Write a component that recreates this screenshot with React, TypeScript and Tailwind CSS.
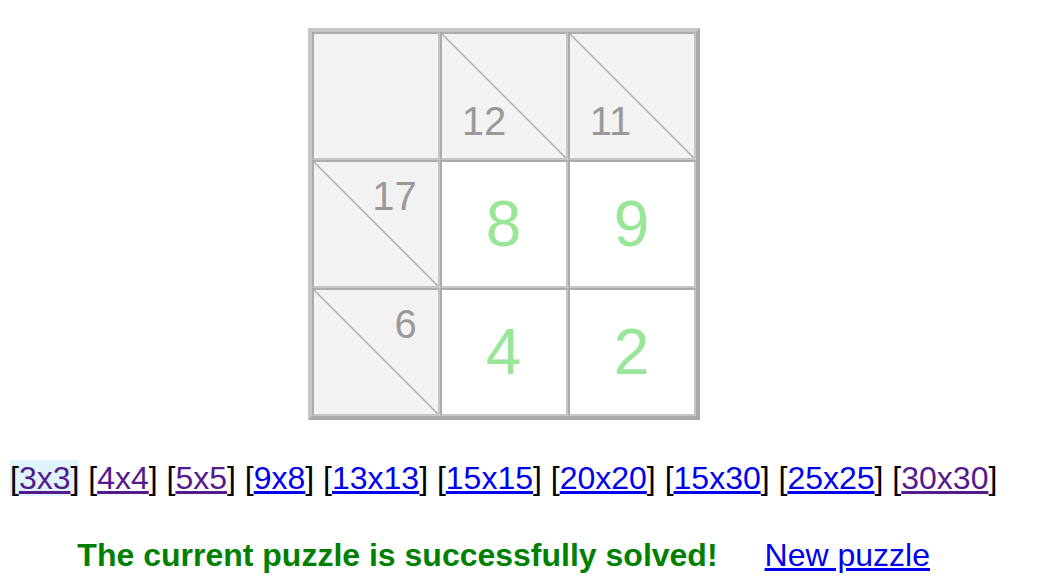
import React from 'react';

type Cell =
    | { kind: 'blank' }
    | { kind: 'down'; sum: number }
    | { kind: 'across'; sum: number }
    | { kind: 'value'; n: number };

const grid: Cell[][] = [
    [{ kind: 'blank' }, { kind: 'down', sum: 12 }, { kind: 'down', sum: 11 }],
    [{ kind: 'across', sum: 17 }, { kind: 'value', n: 8 }, { kind: 'value', n: 9 }],
    [{ kind: 'across', sum: 6 }, { kind: 'value', n: 4 }, { kind: 'value', n: 2 }],
];

const sizes = [
    { label: '3x3', visited: true, current: true },
    { label: '4x4', visited: true },
    { label: '5x5', visited: true },
    { label: '9x8' },
    { label: '13x13' },
    { label: '15x15' },
    { label: '20x20' },
    { label: '15x30' },
    { label: '25x25' },
    { label: '30x30', visited: true },
];

function Diagonal() {
    return (
        <svg className="absolute inset-0 w-full h-full" viewBox="0 0 100 100" preserveAspectRatio="none">
            <line x1="0" y1="0" x2="100" y2="100" stroke="#b0b0b0" strokeWidth="1.5" vectorEffect="non-scaling-stroke" />
        </svg>
    );
}

function GridCell({ cell }: { cell: Cell }) {
    const base = 'relative w-[128px] h-[128px] border-2 border-t-[#aaaaaa] border-l-[#aaaaaa] border-b-[#c6c6c6] border-r-[#c6c6c6]';

    if (cell.kind === 'value') {
        return (
            <div className={`${base} bg-white flex items-center justify-center`}>
                <span className="text-[64px] leading-none text-[#99e699]">{cell.n}</span>
            </div>
        );
    }

    if (cell.kind === 'down') {
        return (
            <div className={`${base} bg-[#f2f2f2] flex items-end justify-start pl-[20px] pb-[17px]`}>
                <Diagonal />
                <span className="relative text-[40px] leading-[40px] text-[#999999]">{cell.sum}</span>
            </div>
        );
    }

    if (cell.kind === 'across') {
        return (
            <div className={`${base} bg-[#f2f2f2] flex items-start justify-end pr-[21px] pt-[14px]`}>
                <Diagonal />
                <span className="relative text-[40px] leading-[40px] text-[#999999]">{cell.sum}</span>
            </div>
        );
    }

    return <div className={`${base} bg-[#f2f2f2]`} />;
}

export default function App() {
    return (
        <div className="min-h-screen bg-white">
            <div className="w-fit ml-[10px] pt-[28px] text-center font-['Liberation_Sans',Arial,sans-serif] text-black">
                {/* Board */}
                <div className="w-fit mx-auto border-4 border-t-[#c6c6c6] border-l-[#c6c6c6] border-b-[#aaaaaa] border-r-[#aaaaaa]">
                    {grid.map((row, r) => (
                        <div key={r} className="flex">
                            {row.map((cell, c) => (
                                <GridCell key={c} cell={cell} />
                            ))}
                        </div>
                    ))}
                </div>

                {/* Sizes */}
                <div className="mt-[40px] text-[32px] leading-[normal] whitespace-nowrap">
                    {sizes.map((s, i) => (
                        <React.Fragment key={s.label}>
                            {i > 0 && ' '}
                            <span className={s.current ? 'bg-[#dff4fc]' : ''}>
                                [<a href="#" className={`underline ${s.visited ? 'text-[#551a8b]' : 'text-[#0000ee]'}`}>{s.label}</a>]
                            </span>
                        </React.Fragment>
                    ))}
                </div>

                {/* Status */}
                <div className="mt-[40px] text-[32px] leading-[normal] whitespace-nowrap">
                    <span className="font-bold text-[#008000]">The current puzzle is successfully solved!</span>
                    <a href="#" className="ml-[47px] underline text-[#0000ee]">New puzzle</a>
                </div>
            </div>
        </div>
    );
}
